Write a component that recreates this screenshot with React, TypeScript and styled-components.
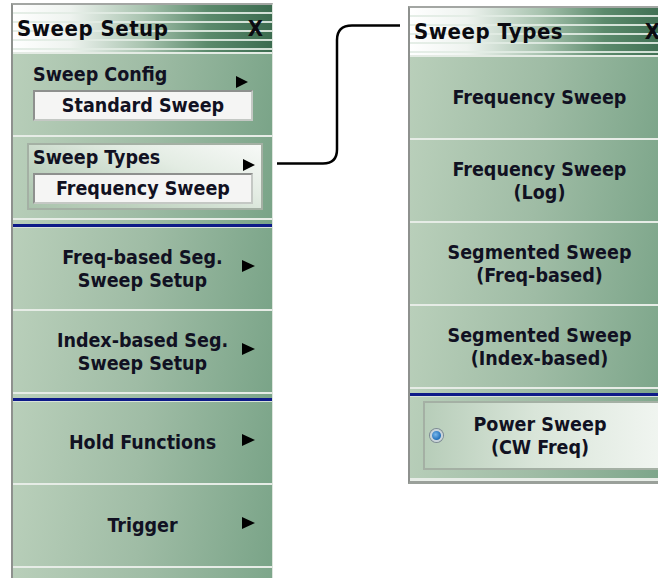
import styled, { createGlobalStyle } from "styled-components";

const GlobalStyle = createGlobalStyle`
    html, body {
        margin: 0;
        padding: 0;
        background: #ffffff;
        overflow: hidden;
    }
    body {
        font-family: "DejaVu Sans Condensed", "DejaVu Sans", Tahoma, sans-serif;
        font-weight: 700;
        color: #111122;
    }
`

const Page = styled.div`
    display: flex;
    align-items: flex-start;
    padding-left: 11px;
    width: 700px;
    height: 578px;
`

const Panel = styled.div<{ top: number; tall: number }>`
    width: 262px;
    flex: none;
    margin-top: ${props => props.top}px;
    height: ${props => props.tall}px;
    box-sizing: border-box;
    border-left: 2px solid #8e918e;
    border-top: 2px solid #a3a6a3;
    border-right: 1px solid #dde5dd;
    border-bottom: ${props => (props.tall < 560 ? "3px solid #9aa09a" : "none")};
    display: flex;
    flex-direction: column;
    overflow: hidden;
    background: #e8eee8;
`

const TitleBar = styled.div`
    height: 47px;
    flex: none;
    display: flex;
    align-items: center;
    justify-content: space-between;
    padding: 0 9px 0 4px;
    border-bottom: 2px solid #e4ebe4;
    background:
        repeating-linear-gradient(to bottom, transparent 0px, transparent 7px, rgba(226, 236, 228, 0.9) 7px, rgba(226, 236, 228, 0.9) 9px),
        linear-gradient(to right, #ffffff 0%, #eef3ef 22%, #a9c4b0 50%, #5b8a6c 75%, #3c6c50 100%);
`

const TitleText = styled.span`
    font-size: 22px;
    color: #0a0a10;
    letter-spacing: 0.5px;
`

const Close = styled.span`
    font-size: 22px;
    color: #0a0a10;
`

const Item = styled.div`
    height: 81px;
    flex: none;
    border-bottom: 2px solid #e6ece6;
    background: linear-gradient(100deg, #b9cfba 0%, #9fbca5 50%, #7aa488 100%);
    box-sizing: content-box;
`

const MenuItem = styled(Item)`
    display: grid;
    grid-template-columns: 32px 1fr 32px;
    align-items: center;
`

const MenuLabel = styled.div`
    grid-column: 2;
    text-align: center;
    font-size: 19.5px;
    line-height: 23px;
    white-space: nowrap;
`

const Arrow = styled.span`
    grid-column: 3;
    justify-self: start;
    margin-left: 2px;
    margin-top: -6px;
    width: 0;
    height: 0;
    border-top: 6.5px solid transparent;
    border-bottom: 6.5px solid transparent;
    border-left: 13px solid #000000;
`

const Frame = styled.div<{ selected?: boolean }>`
    margin: 6px 9px 0 14px;
    height: 62px;
    padding: 1px 0 0 4px;
    border: 2px solid ${props => (props.selected ? "#a4b0a4" : "transparent")};
    background: ${props =>
        props.selected
            ? "linear-gradient(200deg, #f7f9f7 0%, #e3ece3 35%, #bcd0bd 75%, #a9c3ac 100%)"
            : "transparent"};
`

const LabelRow = styled.div`
    display: flex;
    align-items: center;
    justify-content: space-between;
    height: 23px;
    font-size: 19.5px;
`

const RowArrow = styled.span<{ inset: number }>`
    margin-right: ${props => props.inset}px;
    margin-top: 14px;
    width: 0;
    height: 0;
    border-top: 6px solid transparent;
    border-bottom: 6px solid transparent;
    border-left: 12px solid #000000;
`

const ValueBox = styled.div`
    margin: 4px 0 0 0;
    width: 220px;
    height: 31px;
    box-sizing: border-box;
    display: flex;
    align-items: center;
    justify-content: center;
    font-size: 19.5px;
    background: #f5f5f4;
    border: 2px solid #8e908e;
    border-right-color: #c4c8c4;
    border-bottom-color: #c4c8c4;
`

const GroupRule = styled.div`
    height: 8px;
    flex: none;
    box-sizing: border-box;
    background: linear-gradient(100deg, #b9cfba 0%, #9fbca5 50%, #7aa488 100%);
    padding-top: 4px;
    &::after {
        content: "";
        display: block;
        height: 3px;
        background: #0d1a88;
        border-bottom: 1px solid #d8e2d8;
    }
`

const Connector = styled.div`
    width: 135px;
    flex: none;
    height: 180px;
`

const ChoiceItem = styled(Item)`
    display: flex;
    flex-direction: column;
`

const ChoiceBox = styled.div`
    margin: 4px 0 0 13px;
    height: 65px;
    display: flex;
    align-items: center;
    border: 2px solid #a4b0a4;
    border-right: none;
    background: linear-gradient(to right, #b7cdb9 0%, #d9e5d9 45%, #f2f6f2 100%);
`

const Radio = styled.span`
    margin-left: 5px;
    width: 9px;
    height: 9px;
    flex: none;
    border-radius: 50%;
    border: 2px solid #c9d3db;
    background: radial-gradient(circle at 40% 40%, #7ab8ec 0%, #1e6cb8 70%);
    box-shadow: 0 0 0 1px #7d8a94;
`

const ChoiceLabel = styled.div`
    flex: 1;
    text-align: center;
    font-size: 19.5px;
    line-height: 23px;
    margin-right: 32px;
    white-space: nowrap;
`

const leftMenu = [
    { label: ["Freq-based Seg.", "Sweep Setup"] },
    { label: ["Index-based Seg.", "Sweep Setup"], rule: true },
    { label: ["Hold Functions"] },
    { label: ["Trigger"] },
]

const typeMenu = [
    ["Frequency Sweep"],
    ["Frequency Sweep", "(Log)"],
    ["Segmented Sweep", "(Freq-based)"],
    ["Segmented Sweep", "(Index-based)"],
]

function Lines({ lines }: { lines: string[] }) {
    return (
        <>
            {lines.map(l => (
                <div key={l}>{l}</div>
            ))}
        </>
    )
}

function App() {
    return (
        <Page>
            <GlobalStyle />
            <Panel top={3} tall={575}>
                <TitleBar>
                    <TitleText>Sweep Setup</TitleText>
                    <Close>X</Close>
                </TitleBar>
                <Item>
                    <Frame>
                        <LabelRow>
                            Sweep Config
                            <RowArrow inset={13} />
                        </LabelRow>
                        <ValueBox>Standard Sweep</ValueBox>
                    </Frame>
                </Item>
                <Item>
                    <Frame selected>
                        <LabelRow>
                            Sweep Types
                            <RowArrow inset={6} />
                        </LabelRow>
                        <ValueBox>Frequency Sweep</ValueBox>
                    </Frame>
                </Item>
                <GroupRule />
                {leftMenu.map(m => (
                    <div key={m.label.join()}>
                        <MenuItem>
                            <MenuLabel>
                                <Lines lines={m.label} />
                            </MenuLabel>
                            <Arrow />
                        </MenuItem>
                        {m.rule && <GroupRule />}
                    </div>
                ))}
                <Item />
            </Panel>
            <Connector>
                <svg width="135" height="180" viewBox="0 0 135 180">
                    <path
                        d="M4 163.5 H50 Q64 163.5 64 149.5 V40 Q64 25.5 79 25.5 H127"
                        fill="none"
                        stroke="#000000"
                        strokeWidth="2.5"
                    />
                </svg>
            </Connector>
            <Panel top={6} tall={478}>
                <TitleBar>
                    <TitleText>Sweep Types</TitleText>
                    <Close>X</Close>
                </TitleBar>
                {typeMenu.map(lines => (
                    <MenuItem key={lines.join()}>
                        <MenuLabel>
                            <Lines lines={lines} />
                        </MenuLabel>
                    </MenuItem>
                ))}
                <GroupRule />
                <ChoiceItem>
                    <ChoiceBox>
                        <Radio />
                        <ChoiceLabel>
                            <div>Power Sweep</div>
                            <div>(CW Freq)</div>
                        </ChoiceLabel>
                    </ChoiceBox>
                </ChoiceItem>
            </Panel>
        </Page>
    )
}

export default App;
